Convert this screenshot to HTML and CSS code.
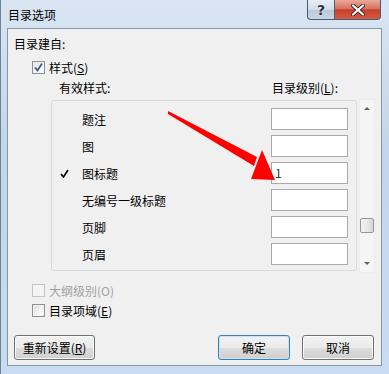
FILE: index.html
```html
<!DOCTYPE html>
<html>

<head>
  <meta charset="utf-8">
  <title>目录选项</title>
  <link rel="stylesheet" href="styles.css">
</head>

<body>
  <div class="window">
    <div class="titlebar">
      <span class="title">目录选项</span>
      <div class="caption-buttons">
        <span class="btn-help">?</span>
        <span class="btn-close">
          <svg width="16" height="12" viewBox="0 0 16 12">
            <path d="M3 1.5 L13 10.5 M13 1.5 L3 10.5" stroke="#3a2a2a" stroke-width="4" stroke-linecap="round" />
            <path d="M3 1.5 L13 10.5 M13 1.5 L3 10.5" stroke="#ffffff" stroke-width="2.2" stroke-linecap="round" />
          </svg>
        </span>
      </div>
    </div>

    <div class="client">
      <div class="heading">目录建自:</div>

      <div class="check-row first">
        <span class="checkbox">
          <svg width="11" height="11" viewBox="0 0 11 11">
            <path d="M2 5.5 L4.5 8.5 L9 1.5" fill="none" stroke="#3d5a8a" stroke-width="1.8" />
          </svg>
        </span>
        <span>样式(<u>S</u>)</span>
      </div>

      <div class="list-head">
        <span>有效样式:</span>
        <span>目录级别(<u>L</u>):</span>
      </div>

      <div class="list-wrap">
        <div class="list">
          <div class="row">
            <span class="mark"></span>
            <span class="name">题注</span>
            <span class="level"></span>
          </div>
          <div class="row">
            <span class="mark"></span>
            <span class="name">图</span>
            <span class="level"></span>
          </div>
          <div class="row">
            <span class="mark">
              <svg width="9" height="9" viewBox="0 0 9 9">
                <path d="M1 5 L3.5 8 L8 1" fill="none" stroke="#000" stroke-width="1.6" />
              </svg>
            </span>
            <span class="name">图标题</span>
            <span class="level">1</span>
          </div>
          <div class="row">
            <span class="mark"></span>
            <span class="name">无编号一级标题</span>
            <span class="level"></span>
          </div>
          <div class="row">
            <span class="mark"></span>
            <span class="name">页脚</span>
            <span class="level"></span>
          </div>
          <div class="row">
            <span class="mark"></span>
            <span class="name">页眉</span>
            <span class="level"></span>
          </div>
        </div>
        <div class="scrollbar">
          <span class="arrow-up"></span>
          <span class="thumb"></span>
          <span class="arrow-down"></span>
        </div>
      </div>

      <div class="check-row disabled outline">
        <span class="checkbox"></span>
        <span>大纲级别(O)</span>
      </div>
      <div class="check-row fields">
        <span class="checkbox"></span>
        <span>目录项域(<u>E</u>)</span>
      </div>

      <div class="buttons">
        <button class="btn reset">重新设置(<u>R</u>)</button>
        <button class="btn default">确定</button>
        <button class="btn">取消</button>
      </div>
    </div>

    <!-- flecha roja de anotación -->
    <svg class="annotation" width="389" height="374" viewBox="0 0 389 374">
      <polygon points="168,111 257,157 254,166 168,114" fill="#ff0000" />
      <polygon points="262,150 275,180 251,179" fill="#ff0000" />
    </svg>
  </div>
</body>

</html>
```

FILE: styles.css
```css
* {
  box-sizing: border-box;
}

body {
  margin: 0;
  font-family: "Noto Sans CJK SC", "Noto Sans", sans-serif;
  font-size: 12px;
  color: #000;
}

u {
  text-decoration: underline;
  text-underline-offset: 1px;
}

/* Marco de la ventana */
.window {
  position: relative;
  width: 389px;
  height: 374px;
  background: linear-gradient(180deg, #d9e5f2 0%, #c3d5e9 40%, #c9dbee 100%);
  border-left: 1px solid #6f8196;
  overflow: hidden;
}

.titlebar {
  display: flex;
  align-items: flex-start;
  height: 28px;
}

.title {
  padding-left: 7px;
  line-height: 29px;
  font-size: 12px;
}

.caption-buttons {
  display: flex;
  margin-left: auto;
  margin-right: 8px;
}

.btn-help,
.btn-close {
  display: flex;
  align-items: center;
  justify-content: center;
  height: 20px;
  border: 1px solid #4b5d72;
  border-top: none;
}

.btn-help {
  width: 27px;
  border-right: none;
  border-bottom-left-radius: 4px;
  background: linear-gradient(180deg, #e6edf5 0%, #d2dde9 50%, #b9c8d8 51%, #c7d5e4 100%);
  color: #2c3440;
  font-family: "DejaVu Sans", sans-serif;
  font-size: 14px;
  font-weight: bold;
  text-shadow: 0 0 2px #fff;
}

.btn-close {
  width: 47px;
  border-bottom-right-radius: 4px;
  background: linear-gradient(180deg, #e9a99b 0%, #d8725f 45%, #c7402a 52%, #d45c40 100%);
}

/* Área de cliente */
.client {
  margin-left: 6px;
  width: 375px;
  height: 338px;
  padding: 0 7px 0 6px;
  background: #f0f0f0;
  border: 1px solid #8597ab;
}

.heading {
  margin-top: 7px;
  line-height: 16px;
}

.check-row {
  display: flex;
  align-items: center;
  height: 16px;
  padding-left: 18px;
}

.check-row.first {
  margin-top: 7px;
}

.check-row.outline {
  margin-top: 9px;
}

.check-row.fields {
  margin-top: 4px;
}

.checkbox {
  display: flex;
  align-items: center;
  justify-content: center;
  width: 13px;
  height: 13px;
  margin-right: 4px;
  border: 1px solid #8e8f8f;
  background: linear-gradient(135deg, #dcdcdc 0%, #f4f4f4 60%, #ffffff 100%);
  box-shadow: inset 0 0 0 1px #f4f4f4;
}

.check-row.disabled {
  color: #a0a0a0;
}

.check-row.disabled .checkbox {
  border-color: #c4c4c4;
  background: #f4f4f4;
}

.list-head {
  display: flex;
  justify-content: space-between;
  margin-top: 5px;
  padding-left: 45px;
  padding-right: 36px;
  line-height: 16px;
}

/* Lista de estilos */
.list-wrap {
  display: flex;
  margin-top: 4px;
  margin-left: 37px;
}

.list {
  flex-shrink: 0;
  width: 306px;
  height: 171px;
  padding-top: 7px;
  border: 1px solid #d9d9d9;
  border-radius: 3px;
  background: #f0f0f0;
}

.row {
  display: flex;
  align-items: center;
  height: 22px;
  margin-bottom: 5px;
}

.mark {
  display: flex;
  justify-content: center;
  width: 30px;
  padding-right: 6px;
}

.name {
  flex: 1;
}

.level {
  width: 77px;
  height: 22px;
  margin-right: 8px;
  padding-left: 3px;
  border: 1px solid #a9a9a9;
  background: #fff;
  line-height: 20px;
  color: #333;
}

.scrollbar {
  flex-shrink: 0;
  display: flex;
  flex-direction: column;
  align-items: center;
  width: 16px;
  height: 174px;
  margin-left: 2px;
  margin-top: -1px;
  padding-top: 7px;
  border: 1px solid #ececec;
  background: #f5f5f5;
}

.arrow-up,
.arrow-down {
  width: 0;
  height: 0;
  border-left: 3px solid transparent;
  border-right: 3px solid transparent;
}

.arrow-up {
  border-bottom: 3px solid #606060;
}

.arrow-down {
  margin-top: 29px;
  border-top: 3px solid #606060;
}

.thumb {
  width: 14px;
  height: 15px;
  margin-top: 108px;
  border: 1px solid #979797;
  border-radius: 2px;
  background: linear-gradient(90deg, #f3f3f3 0%, #e8e8e8 50%, #d6d6d6 100%);
}

/* Botones */
.buttons {
  display: flex;
  margin-top: 17px;
}

.btn {
  width: 72px;
  height: 25px;
  padding: 0;
  font-family: inherit;
  font-size: 12px;
  color: #000;
  border: 1px solid #707070;
  border-radius: 3px;
  background: linear-gradient(180deg, #f2f2f2 0%, #ebebeb 50%, #dddddd 51%, #cfcfcf 100%);
  box-shadow: inset 0 0 0 1px #fafafa;
}

.btn.reset {
  width: 81px;
}

.btn.default {
  margin-left: auto;
  margin-right: 12px;
  border-color: #3c7fb1;
  box-shadow: inset 0 0 0 1px #c2e4f6;
}

.annotation {
  position: absolute;
  top: 0;
  left: -1px;
  pointer-events: none;
}
```
